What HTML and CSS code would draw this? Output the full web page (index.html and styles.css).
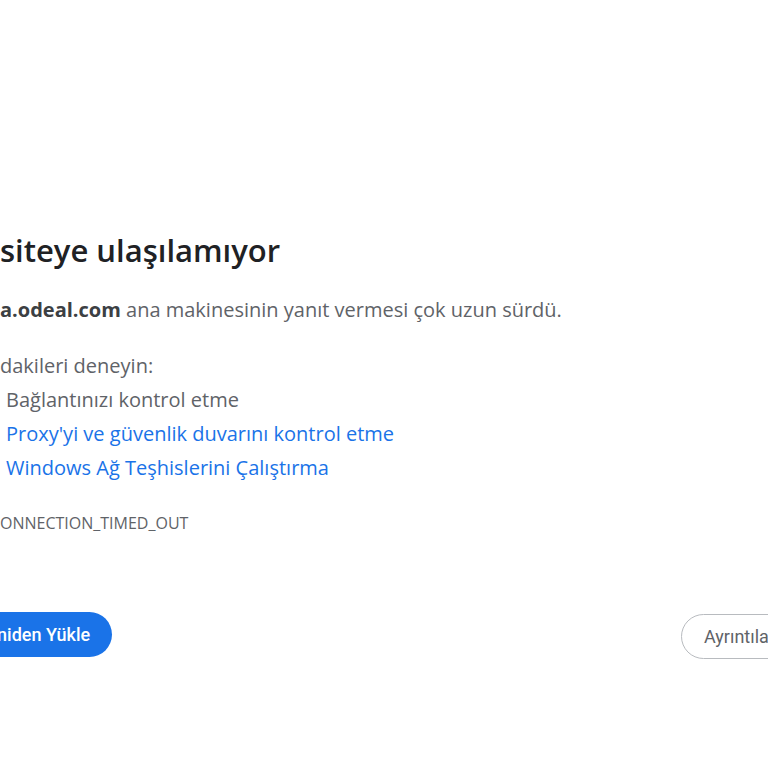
FILE: index.html
```html
<!DOCTYPE html>
<html lang="tr">
<head>
<meta charset="utf-8">
<link rel="stylesheet" href="styles.css">
</head>
<body>
<div class="page">
  <main class="content">
    <h1 class="title">siteye ulaşılamıyor</h1>
    <p class="desc"><b class="host">a.odeal.com</b> ana makinesinin yanıt vermesi çok uzun sürdü.</p>
    <p class="try">dakileri deneyin:</p>
    <ul class="suggestions">
      <li class="item">Bağlantınızı kontrol etme</li>
      <li class="item"><a class="link" href="#">Proxy'yi ve güvenlik duvarını kontrol etme</a></li>
      <li class="item"><a class="link" href="#">Windows Ağ Teşhislerini Çalıştırma</a></li>
    </ul>
    <div class="code">ONNECTION_TIMED_OUT</div>
    <div class="buttons">
      <button class="btn btn-primary">Yeniden Yükle</button>
      <button class="btn btn-secondary">Ayrıntılar</button>
    </div>
  </main>
</div>
</body>
</html>
```
FILE: styles.css
```css
html, body {
  margin: 0;
  padding: 0;
  background: #ffffff;
  overflow: hidden;
}
.page {
  width: 768px;
  height: 768px;
  overflow: hidden;
}
.content {
  padding-top: 230px;
  font-family: "Open Sans", "Noto Sans", sans-serif;
  color: #5f6368;
}
.title {
  margin: 0;
  font-size: 31px;
  line-height: 40px;
  font-weight: 600;
  color: #202124;
}
.desc {
  margin: 27px 0 0;
  font-size: 20px;
  line-height: 26px;
}
.host {
  font-weight: 700;
  color: #3c4043;
}
.try {
  margin: 30px 0 0;
  font-size: 20px;
  line-height: 26px;
}
.suggestions {
  list-style: none;
  margin: 4px 0 0;
  padding: 0;
}
.item {
  font-size: 20px;
  line-height: 34px;
  padding-left: 6px;
}
.link {
  color: #1a73e8;
  text-decoration: none;
}
.code {
  margin-top: 28px;
  font-size: 16px;
  line-height: 20px;
  color: #5f6368;
}
.buttons {
  margin-top: 79px;
  margin-left: -45px;
  display: grid;
  grid-template-columns: 726px max-content;
  align-items: start;
}
.btn {
  font-family: Roboto, "Liberation Sans", sans-serif;
  font-size: 18px;
  font-weight: 500;
  height: 45px;
  border-radius: 23px;
  padding: 0 22px;
  white-space: nowrap;
}
.btn-primary {
  justify-self: start;
  background: #1a73e8;
  color: #ffffff;
  border: none;
}
.btn-secondary {
  background: #ffffff;
  color: #5f6368;
  border: 1px solid #b8bbbf;
  font-weight: 400;
  margin-top: 2px;
}
```
